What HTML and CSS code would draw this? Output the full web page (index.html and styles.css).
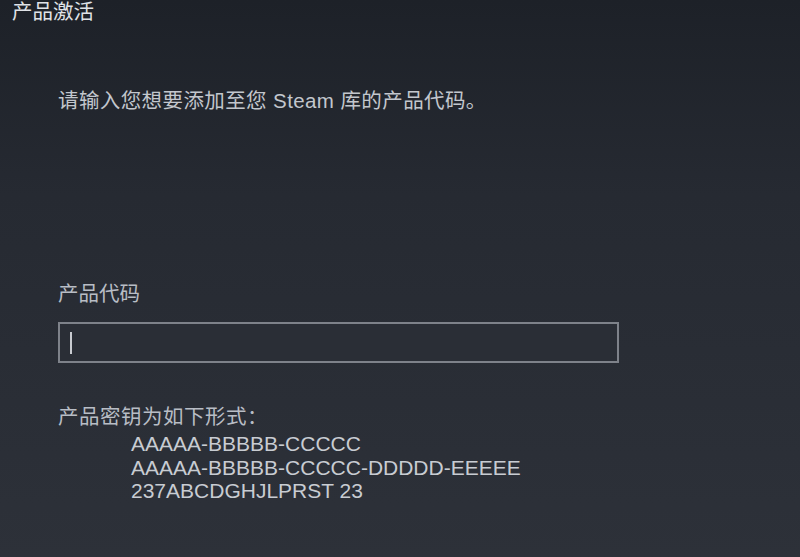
FILE: index.html
```html
<!DOCTYPE html>
<html lang="zh">
<head>
<meta charset="utf-8">
<link rel="stylesheet" href="styles.css">
</head>
<body>
<div class="window">
  <div class="title">产品激活</div>
  <div class="content">
    <p class="intro">请输入您想要添加至您 Steam 库的产品代码。</p>
    <label class="label">产品代码</label>
    <div class="input"><span class="caret"></span></div>
    <div class="formats">
      <div class="formats-title">产品密钥为如下形式：</div>
      <div class="formats-list">
        <div>AAAAA-BBBBB-CCCCC</div>
        <div>AAAAA-BBBBB-CCCCC-DDDDD-EEEEE</div>
        <div>237ABCDGHJLPRST 23</div>
      </div>
    </div>
  </div>
</div>
</body>
</html>
```
FILE: styles.css
```css
html, body {
  margin: 0;
  padding: 0;
  height: 100%;
}
body {
  font-family: "Liberation Sans", Arial, "Noto Sans CJK SC", sans-serif;
  font-size: 20.5px;
  color: #c3c7cd;
}
.window {
  height: 557px;
  background: linear-gradient(to bottom, #1d2128 0%, #262a32 35%, #2d3139 100%);
  overflow: hidden;
}
.title {
  padding: 0 0 0 12px;
  line-height: 24px;
  color: #e0e3e7;
}
.content {
  padding: 65px 0 0 58px;
}
.intro {
  margin: 0;
  line-height: 24px;
  letter-spacing: 0.4px;
}
.label {
  display: block;
  margin-top: 169px;
  line-height: 24px;
  color: #b8bdc5;
}
.input {
  margin-top: 16px;
  width: 561px;
  height: 41px;
  box-sizing: border-box;
  border: 2px solid #7e828a;
  background: #2a2e36;
  display: flex;
  align-items: center;
  padding-left: 10px;
}
.caret {
  width: 2px;
  height: 22px;
  background: #c8cbd0;
}
.formats {
  margin-top: 42px;
}
.formats-title {
  line-height: 24px;
  color: #b8bdc5;
  letter-spacing: 0.5px;
}
.formats-list {
  padding-left: 73px;
  margin-top: 3px;
  font-size: 21px;
  line-height: 23.5px;
  color: #c8ccd2;
}
```
